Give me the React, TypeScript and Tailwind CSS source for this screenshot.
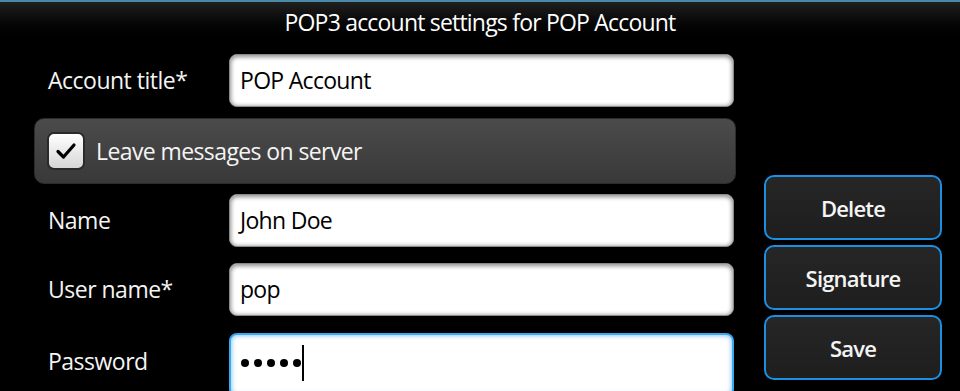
import React from "react";

const font = "font-['Open_Sans',sans-serif]";

function Field({
  label,
  value,
  focused,
  className,
  password,
}: {
  label: string;
  value: string;
  focused?: boolean;
  className?: string;
  password?: boolean;
}) {
  return (
    <div className={`flex items-stretch ${className ?? ""}`}>
      <div
        className={
          password
            ? "w-[195px] pl-[14px] pb-[8px] flex items-center text-[23px] tracking-[-0.5px] text-[#f4f4f4] leading-none"
            : "w-[195px] pl-[14px] flex items-center text-[23px] tracking-[-0.5px] text-[#f4f4f4] leading-none"
        }
      >
        {label}
      </div>
      <div
        className={
          focused
            ? "w-[505px] flex items-start pt-[10px] pl-[10px] bg-white rounded-[8px] border-2 border-[#37aaf0] shadow-[inset_0_0_4px_1px_rgba(70,170,240,0.6)]"
            : "w-[505px] flex items-center pl-[10px] bg-white rounded-[8px] border border-[#8a8a8a] shadow-[inset_0_1px_4px_1px_rgba(0,0,0,0.45)]"
        }
      >
        {password ? (
          <div className="flex items-center">
            <div className="flex items-center gap-[5px]">
              <span className="w-[8px] h-[8px] rounded-full bg-black" />
              <span className="w-[8px] h-[8px] rounded-full bg-black" />
              <span className="w-[8px] h-[8px] rounded-full bg-black" />
              <span className="w-[8px] h-[8px] rounded-full bg-black" />
              <span className="w-[8px] h-[8px] rounded-full bg-black" />
            </div>
            <span className="w-[2px] h-[36px] bg-black ml-[1px]" />
          </div>
        ) : (
          <span className="text-[23px] tracking-[-0.7px] text-black leading-none">{value}</span>
        )}
      </div>
    </div>
  );
}

function Btn({ label }: { label: string }) {
  return (
    <div className="h-[65px] rounded-[10px] border-2 border-[#1b8fe3] bg-gradient-to-b from-[#262626] to-[#1e1e1e] flex items-center justify-center text-[22px] tracking-[-0.8px] font-semibold text-[#f4f4f4] leading-none">
      {label}
    </div>
  );
}

export default function App() {
  return (
    <div className={`w-[960px] h-[391px] bg-black overflow-hidden ${font}`}>
      <div className="h-[46px] border-t-2 border-[#4b89a8] bg-gradient-to-b from-[#202020] to-black flex justify-center pt-[5px]">
        <span className="text-[23px] tracking-[-0.8px] text-white leading-[30px]">
          POP3 account settings for POP Account
        </span>
      </div>
      <div className="flex">
        <div className="ml-[34px] w-[702px] flex flex-col">
          <Field label="Account title*" value="POP Account" className="mt-[8px] h-[53px]" />
          <div className="mt-[11px] h-[66px] rounded-[10px] bg-gradient-to-b from-[#4b4b4b] to-[#393939] border border-[#2c2c2c] flex items-center pl-[12px]">
            <div className="w-[38px] h-[38px] rounded-[7px] border-2 border-[#2a2a2a] bg-gradient-to-b from-white to-[#d6d6d6] flex items-center justify-center">
              <svg width="22" height="18" viewBox="0 0 22 18" fill="none">
                <path d="M3 9.5 L8.5 15 L19 3" stroke="black" strokeWidth="3.2" strokeLinecap="round" strokeLinejoin="round" />
              </svg>
            </div>
            <span className="ml-[11px] text-[23px] tracking-[-0.6px] text-[#f4f4f4] leading-none">
              Leave messages on server
            </span>
          </div>
          <Field label="Name" value="John Doe" className="mt-[10px] h-[53px]" />
          <Field label="User name*" value="pop" className="mt-[16px] h-[53px]" />
          <Field label="Password" value="" password focused className="mt-[17px] h-[64px]" />
        </div>
        <div className="ml-[28px] w-[178px] mt-[129px] flex flex-col gap-[5px]">
          <Btn label="Delete" />
          <Btn label="Signature" />
          <Btn label="Save" />
        </div>
      </div>
    </div>
  );
}
